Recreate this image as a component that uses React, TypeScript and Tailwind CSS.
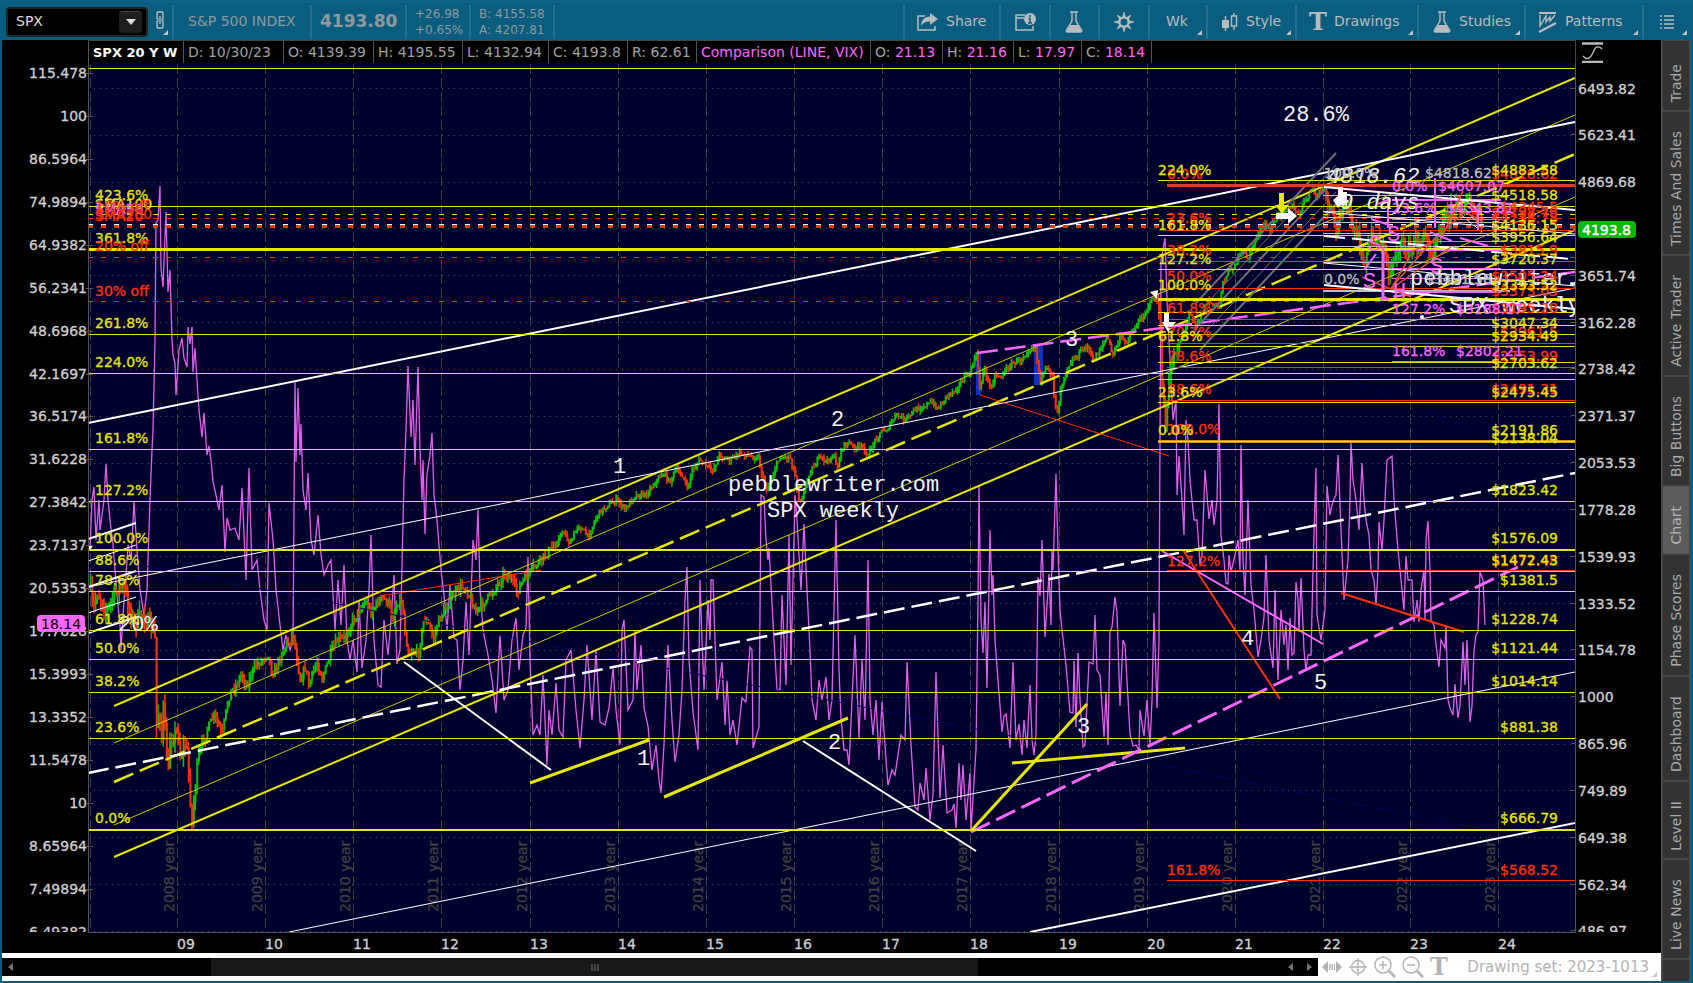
import React from 'react';

const YELLOW = '#e6e600';
const RED = '#ff3300';
const PINK = '#ff66ff';
const GREY = '#bfbfbf';

type Point = [number, number];

/**
 * Turns "x,y x,y ..." into points
 */
const parsePoints = (source: string): Point[] =>
  source
    .trim()
    .split(/\s+/)
    .map((pair) => pair.split(',').map(Number) as Point);

const SPX_PATH = parsePoints(`
90,588 93,612 97,592 102,600 106,612 112,600 118,587 124,590 128,602 134,625 143,614 149,624 152,628 155,640
156,720 157,740 159,690 161,750 163,705 166,745 168,780 170,738 174,735 178,730 180,755 183,750 186,742 189,780
192,825 194,795 198,760 203,740 208,728 214,715 218,725 222,735 227,705 230,692 236,685 241,675 247,685 252,672
256,665 262,660 268,653 272,675 276,668 282,652 289,640 293,635 297,660 300,680 306,665 308,688 312,675 317,662
322,678 327,665 332,650 338,640 345,638 350,625 356,615 362,605 366,602 371,612 377,603 382,598 388,603 393,618
398,600 402,603 406,640 409,655 413,650 418,655 424,618 430,628 433,640 438,622 444,610 452,597 460,587 466,588
470,598 476,612 484,602 492,593 500,580 504,573 510,578 517,592 522,582 528,575 531,570 541,560 550,550 560,537
563,530 570,545 578,524 588,537 597,515 606,506 617,500 625,510 634,495 645,495 655,482 663,473 669,482 676,470
683,476 687,490 692,470 700,460 704,465 713,470 719,455 730,460 740,453 750,456 758,457 762,475 766,490 771,480
776,465 780,457 790,457 795,475 799,500 803,495 808,475 814,465 820,457 827,462 833,455 837,468 842,447 848,443
856,448 864,447 868,458 872,445 880,432 888,428 896,415 905,420 915,410 925,405 931,403 938,408 946,396 956,388
965,377 970,373 974,360 977,353 979,390 984,368 990,388 995,375 1002,375 1010,365 1020,360 1028,350 1035,346
1040,380 1046,370 1052,372 1054,395 1057,415 1060,390 1065,372 1070,362 1078,355 1087,345 1092,360 1098,352
1107,336 1112,355 1120,338 1125,342 1133,330 1140,320 1147,308 1153,298 1157,300 1160,330 1162,380 1165,430
1168,400 1170,370 1175,350 1180,340 1185,330 1190,310 1195,325 1203,310 1207,300 1213,305 1219,308 1222,283
1228,272 1236,262 1242,252 1248,258 1253,245 1258,233 1264,225 1270,230 1276,218 1284,210 1292,205 1296,215
1300,213 1305,200 1311,190 1316,196 1321,190 1324,188 1328,205 1332,215 1335,230 1338,225 1342,205 1346,200
1350,215 1354,235 1358,240 1363,262 1367,250 1372,235 1378,240 1384,250 1388,275 1391,268 1396,250 1404,245
1410,250 1418,240 1427,240 1432,250 1440,225 1448,215 1455,205 1460,208 1466,200 1470,205 1475,212 1480,222 1482,229`);

const VIX_PATH = `
90,550 92,500 94,487 96,540 99,500 100,530 104,500 106,464 108,500 110,520 113,545 117,595 120,625 121,650
124,600 126,575 128,545 131,560 134,502 137,550 140,590 144,615 147,590 150,500 152,450 153,430 155,340 156,223
158,220 160,186 161,268 163,287 166,212 168,292 170,270 172,340 173,355 175,363 176,395 179,350 182,338 184,358
187,367 188,327 190,344 192,327 193,372 195,348 197,380 199,410 202,437 204,413 207,455 209,446 211,460 213,482
216,495 219,510 222,485 225,552 227,518 230,530 235,528 239,540 242,488 246,580 249,468 252,570 257,560 260,590
264,620 267,630 269,503 273,540 276,590 280,625 283,650 286,635 290,650 293,640 295,382 296,462 298,388 300,455
301,424 303,490 306,510 308,473 311,540 314,555 318,515 321,555 324,575 328,565 331,560 335,630 338,580 341,625
344,565 347,640 350,660 353,640 357,672 359,600 362,668 366,640 369,590 371,535 374,640 378,685 381,687 384,620
388,655 391,620 394,575 397,664 400,650 404,480 406,430 408,366 411,437 413,400 415,465 418,367 420,450 422,500
423,460 425,534 427,474 430,455 432,433 434,495 437,520 441,570 444,595 447,630 450,585 454,638 457,640 460,690
463,660 466,602 469,655 473,540 476,560 478,510 480,590 483,630 488,655 492,680 496,713 500,635 504,700 508,690
512,640 516,618 519,670 523,635 526,628 528,557 530,660 533,735 537,725 540,735 543,675 547,765 549,710 552,735
556,683 559,730 563,737 566,660 571,650 576,710 580,748 584,700 587,645 592,720 596,650 600,722 605,725 609,708
613,668 616,710 620,745 622,630 624,620 628,710 633,700 635,630 637,690 641,645 644,708 648,726 652,770 656,745
659,780 661,793 664,745 668,645 672,720 675,762 679,735 682,690 685,600 687,567 689,660 693,712 698,750 700,580
702,640 704,690 708,600 710,640 711,580 713,580 717,700 722,662 725,725 727,680 730,735 733,720 737,745 742,698
746,702 750,647 752,650 753,748 759,727 761,495 764,497 766,540 768,560 769,548 774,640 777,690 780,690 782,595
786,685 789,535 791,665 795,495 797,520 801,590 804,524 807,590 810,650 812,700 816,720 819,680 822,700 826,677
829,720 832,700 836,520 839,670 841,718 844,750 847,750 849,765 852,700 855,635 859,738 862,660 865,720 868,560
870,700 873,735 876,700 879,760 882,702 886,760 888,785 892,770 895,775 901,735 905,740 907,662 911,745 915,807
918,810 920,783 924,800 926,768 930,820 933,795 936,672 940,798 943,745 947,813 952,810 954,804 956,828 959,763
961,800 963,765 966,820 970,773 971,832 975,765 976,750 978,600 979,486 981,620 983,653 985,602 987,688 990,530
992,595 993,575 995,640 998,680 1002,732 1004,716 1006,714 1010,748 1013,662 1016,740 1019,724 1022,755 1024,720
1027,748 1030,685 1032,740 1034,755 1036,735 1038,577 1040,596 1042,540 1045,637 1049,574 1051,625 1052,550
1053,570 1056,474 1058,550 1060,610 1062,630 1066,665 1070,712 1073,713 1074,661 1076,727 1078,653 1080,700
1083,747 1085,745 1089,662 1093,664 1095,615 1097,670 1100,675 1104,737 1106,693 1108,745 1110,632 1112,627
1115,597 1117,612 1120,706 1123,640 1125,645 1130,734 1133,746 1136,745 1139,750 1140,710 1144,736 1147,700
1150,745 1152,700 1154,613 1157,708 1159,640 1160,440 1161,260 1165,238 1167,300 1171,380 1173,420 1176,400
1177,495 1179,456 1182,500 1184,535 1186,420 1188,440 1190,480 1192,500 1194,520 1197,520 1200,565 1202,555
1205,470 1209,519 1212,500 1214,525 1217,500 1219,404 1221,535 1224,560 1226,583 1228,584 1229,555 1231,572
1235,555 1238,540 1240,570 1241,445 1243,560 1245,595 1248,500 1251,585 1254,610 1258,657 1261,640 1264,617
1266,555 1269,640 1273,668 1275,590 1278,680 1281,610 1284,645 1286,625 1288,670 1290,618 1292,655 1294,653
1296,582 1298,600 1299,632 1301,578 1304,650 1306,670 1308,655 1311,655 1313,570 1315,500 1316,468 1317,615
1321,640 1325,610 1327,486 1330,515 1332,505 1334,499 1336,495 1338,455 1341,530 1344,600 1348,560 1350,500
1351,442 1353,480 1356,500 1359,530 1362,463 1364,500 1366,520 1369,535 1371,570 1374,580 1376,605 1378,570
1379,522 1382,550 1384,520 1387,460 1392,456 1394,500 1398,550 1402,590 1404,610 1406,556 1408,580 1412,580
1414,622 1417,600 1419,622 1421,590 1424,570 1425,620 1426,540 1428,521 1430,570 1431,620 1434,625 1436,645
1439,667 1441,640 1445,648 1446,625 1448,700 1450,708 1453,715 1455,684 1458,718 1460,705 1463,642 1465,685
1467,640 1470,722 1472,706 1474,650 1476,635 1478,632 1480,572 1483,580 1485,625`;

const YEARS: [number, string, string][] = [
  [177, '2008', '09'], [265, '2009', '10'], [353, '2010', '11'], [441, '2011', '12'], [530, '2012', '13'],
  [618, '2013', '14'], [706, '2014', '15'], [794, '2015', '16'], [882, '2016', '17'], [970, '2017', '18'],
  [1059, '2018', '19'], [1147, '2019', '20'], [1235, '2020', '21'], [1323, '2021', '22'], [1410, '2022', '23'],
  [1498, '2023', '24'],
];

const LEFT_SCALE = [
  '115.478', '100', '86.5964', '74.9894', '64.9382', '56.2341', '48.6968', '42.1697', '36.5174', '31.6228', '27.3842',
  '23.7137', '20.5353', '17.7828', '15.3993', '13.3352', '11.5478', '10', '8.65964', '7.49894', '6.49382',
];

const RIGHT_SCALE = [
  '6493.82', '5623.41', '4869.68', '4216.97', '3651.74', '3162.28', '2738.42', '2371.37', '2053.53', '1778.28',
  '1539.93', '1333.52', '1154.78', '1000', '865.96', '749.89', '649.38', '562.34', '486.97',
];

// y, label on the left, price on the right
const MAIN_FIB: [number, string, string][] = [
  [206, '423.6%', ''], [249, '361.8%', ''], [334, '261.8%', ''], [373, '224.0%', ''], [449, '161.8%', '$2138.04'],
  [501, '127.2%', '$1823.42'], [549, '100.0%', '$1576.09'], [571, '88.6%', '$1472.43'], [591, '78.6%', '$1381.5'],
  [630, '61.8%', '$1228.74'], [659, '50.0%', '$1121.44'], [692, '38.2%', '$1014.14'], [738, '23.6%', '$881.38'],
  [829, '0.0%', '$666.79'],
];

const THICK_LEVELS: Record<number, number> = { 249: 3, 549: 2, 829: 2 };

// baseline, label on the left, price on the right
const RED_LABELS: [number, string, string][] = [
  [179, '0.0%', '$4818.62'], [223, '23.6%', '$4238.78'], [255, '38.2%', '$3815.9'], [281, '50.0%', '$3505.24'],
  [313, '61.8%', '$3195.28'], [337, '70.7%', '$2961.5'], [361, '78.6%', '$2753.99'], [394, '88.6%', '$2491.31'],
  [434, '100.0%', ''], [566, '127.2%', '$1477.48'], [875, '161.8%', '$568.52'],
];

const YELLOW_LABELS: [number, string, string][] = [
  [175, '224.0%', '$4883.58'], [200, '', '$4518.58'], [230, '161.8%', '$4136.15'], [242, '', '$3956.64'],
  [264, '127.2%', '$3720.37'], [290, '100.0%', '$3393.52'], [328, '', '$3047.34'], [341, '61.8%', '$2934.49'],
  [368, '', '$2703.62'], [397, '23.6%', '$2475.45'], [435, '0.0%', '$2191.86'],
];

/**
 * Weekly bars spread along the SPX path, with a fixed pseudo random wick
 */
const buildCandles = () => {
  let seed = 7;
  const random = () => {
    seed = (seed * 16807) % 2147483647;
    return seed / 2147483647;
  };

  let segment = 0;
  let last = SPX_PATH[0][1];
  const up: string[] = [];
  const down: string[] = [];

  for (let week = 0; week < 824; week++) {
    const x = 90.5 + week * 1.69;
    while (segment < SPX_PATH.length - 2 && SPX_PATH[segment + 1][0] < x) segment++;
    const [x1, y1] = SPX_PATH[segment];
    const [x2, y2] = SPX_PATH[segment + 1];
    const wild = x < 200 || x > 1325 || (x > 1158 && x < 1180) ? 16 : x < 560 ? 9 : 6;
    const close = y1 + ((y2 - y1) * (x - x1)) / (x2 - x1) + (random() - 0.5) * wild;
    const high = Math.min(last, close) - random() * wild * 0.7;
    const low = Math.max(last, close) + random() * wild * 0.7;
    const body = Math.max(2, Math.abs(close - last));
    const top = Math.min(last, close);
    const bar = `M${x.toFixed(1)} ${high.toFixed(1)}V${low.toFixed(1)}M${(x + 0.5).toFixed(1)} ${top.toFixed(1)}v${body.toFixed(1)}`;
    (close < last ? up : down).push(bar);
    last = close;
  }

  return { up: up.join(''), down: down.join('') };
};

const candles = buildCandles();

interface LineProps {
  from: Point;
  to: Point;
  color?: string;
  width?: number;
  dash?: string;
}

const Line: React.FC<LineProps> = ({ from, to, color = '#ffffff', width = 1, dash }) => (
  <line x1={from[0]} y1={from[1]} x2={to[0]} y2={to[1]} stroke={color} strokeWidth={width} strokeDasharray={dash} />
);

interface LevelProps {
  y: number;
  x?: number;
  end?: number;
  color?: string;
  width?: number;
  dash?: string;
}

const Level: React.FC<LevelProps> = ({ y, x = 88, end = 1575, color = YELLOW, width = 1, dash }) => (
  <line x1={x} x2={end} y1={y + 0.5} y2={y + 0.5} stroke={color} strokeWidth={width} strokeDasharray={dash} shapeRendering="crispEdges" />
);

const Grid = () => (
  <g>
    {RIGHT_SCALE.map((label, index) => (
      <Level key={label} y={Math.round(88 + index * 46.83)} color="#505058" dash="1 5" />
    ))}
    {[90, ...YEARS.map(([x]) => x)].map((x) => (
      <line key={x} x1={x + 0.5} x2={x + 0.5} y1={64} y2={932} stroke="#404040" strokeDasharray="10 4" />
    ))}
    {YEARS.map(([x, year]) => (
      <text key={year} transform={`translate(${x - 3} 912) rotate(-90)`} fill="#404040" stroke="#404040" strokeWidth={0.3}>
        {year} year
      </text>
    ))}
  </g>
);

const Axes = () => (
  <g fill="#d0d0d0">
    <g clipPath="url(#axisClip)">
      {LEFT_SCALE.map((label, index) => {
        const y = 73 + index * 42.93;
        return (
          <g key={label}>
            <text x={87} y={y + 5} textAnchor="end" stroke="#d0d0d0" strokeWidth={0.3}>{label}</text>
            <path d={`M86 ${Math.round(y) + 0.5}h7`} stroke="#555555" />
          </g>
        );
      })}
      {RIGHT_SCALE.map((label, index) => {
        const y = 88.5 + index * 46.83;
        return (
          <g key={label}>
            <text x={1578} y={y + 5} stroke="#d0d0d0" strokeWidth={0.3}>{label}</text>
            <path d={`M1571 ${Math.round(y) - 0.5}h5`} stroke="#555555" />
          </g>
        );
      })}
    </g>
    {YEARS.map(([x, , label]) => (
      <text key={label} x={x} y={949} stroke="#d0d0d0" strokeWidth={0.3}>{label}</text>
    ))}
    <path d="M88.5 63V932.5H1575.5V63" fill="none" stroke="#55555a" />
    <rect x={37} y={615} width={48} height={17} rx={4} fill={PINK} />
    <text x={41} y={629} fill="#000000">18.14</text>
    <rect x={1578} y={221} width={58} height={17} rx={4} fill="#00b900" />
    <text x={1582} y={235} fill="#ffffff" stroke="#ffffff" strokeWidth={0.4}>4193.8</text>
  </g>
);

const Trendlines = () => (
  <g>
    <Line from={[140, 565]} to={[1480, 828]} color="#000066" dash="20 8" />
    <Line from={[1220, 325]} to={[1495, 440]} color="#000066" dash="20 8" />
    <Line from={[1190, 430]} to={[1330, 300]} color="#000066" dash="20 8" />

    <Line from={[114, 706]} to={[1575, 78]} color={YELLOW} width={2} />
    <Line from={[114, 743]} to={[1575, 115]} color="#c8c800" />
    <Line from={[114, 782]} to={[1575, 154]} color={YELLOW} width={2.5} dash="21 7" />
    <Line from={[114, 825]} to={[1575, 197]} color="#c8c800" />
    <Line from={[114, 857]} to={[1575, 230]} color={YELLOW} width={2} />

    <Line from={[88, 423]} to={[1575, 122]} width={2} />
    <Line from={[88, 587]} to={[1575, 288]} />
    <Line from={[88, 773]} to={[1575, 473]} width={2.5} dash="21 7" />
    <Line from={[289, 932]} to={[1575, 672]} />
    <Line from={[1030, 932]} to={[1575, 823]} width={2} />

    {[539, 587, 633].map((y) => (
      <Line key={y} from={[88, y]} to={[136, y - 16]} width={2} />
    ))}
    {[561, 613].map((y) => (
      <Line key={y} from={[88, y]} to={[136, y - 16]} />
    ))}
    <path d="M88 546l5-1-3 6h-2z" fill="#ffffff" />

    <Line from={[380, 596]} to={[541, 570]} color={RED} />
    <Line from={[980, 395]} to={[1169, 456]} color={RED} />
    <Line from={[404, 662]} to={[551, 770]} width={2} />
    <Line from={[803, 741]} to={[976, 851]} width={2} />
    <Line from={[530, 783]} to={[649, 740]} color={YELLOW} width={3} />
    <Line from={[664, 797]} to={[848, 718]} color={YELLOW} width={3} />
    <Line from={[1012, 763]} to={[1185, 748]} color={YELLOW} width={3} />
    <Line from={[971, 831]} to={[1087, 704]} color={YELLOW} width={3} />
    <Line from={[971, 832]} to={[1518, 567]} color={PINK} width={3} dash="21 7" />
    <Line from={[977, 353]} to={[1575, 272]} color={PINK} width={2.5} dash="21 7" />
    <Line from={[1162, 551]} to={[1323, 644]} color={PINK} width={2} />
    <Line from={[1183, 550]} to={[1280, 699]} color={RED} width={2} />
    <Line from={[1341, 593]} to={[1464, 632]} color={RED} width={2} />

    {/* grey channel under the last rally */}
    <Line from={[1196, 303]} to={[1336, 153]} color="#6e6e78" width={2} />
    <Line from={[1196, 315]} to={[1336, 165]} color="#6e6e78" />
    <Line from={[1194, 330]} to={[1336, 178]} color="#6e6e78" width={2} />
    <Line from={[1200, 338]} to={[1336, 192]} color="#6e6e78" />
    <Line from={[1200, 350]} to={[1336, 204]} color="#6e6e78" width={2} />
  </g>
);

const Levels = () => (
  <g>
    <Level y={68} />
    {MAIN_FIB.map(([y]) => (
      <Level key={y} y={y} width={THICK_LEVELS[y] ?? 1} />
    ))}
    <Level y={214} dash="5 8" />
    <Level y={218} color={RED} dash="5 8" />
    <Level y={224} color="#ffffff" dash="5 8" width={2} />
    <Level y={226} color={RED} dash="5 8" width={3} />
    <Level y={257} color={RED} dash="5 8" />
    <Level y={301} color={RED} dash="5 8" />

    {[180, 235, 269, 312, 325, 334, 346, 362, 373, 379, 402].map((y) => (
      <Level key={y} y={y} x={1158} />
    ))}
    <Level y={299} x={1158} width={3} />
    <Level y={441} x={1158} width={3} color="#d09000" />
    <Level y={441} x={1158} />
    <Level y={185} x={1167} color="#d84020" width={3} />
    {[230, 261, 288, 319, 343, 367, 400, 570, 880].map((y) => (
      <Level key={y} y={y} x={1167} color={RED} />
    ))}
    {[195, 211, 217, 222, 233, 246, 262].map((y) => (
      <Level key={y} y={y} x={1323} end={1510} color={GREY} />
    ))}
    <Level y={290} x={1323} end={1510} color={GREY} width={2} />
    {[219, 241, 250, 268, 278, 319, 361].map((y) => (
      <Level key={y} y={y} x={1392} end={1501} color={PINK} />
    ))}
    <Level y={199} x={1392} end={1501} color={PINK} width={2} />
    <Level y={291} x={1392} end={1501} color={PINK} width={2} />
  </g>
);

const RecentCluster = () => (
  <g>
    <Line from={[1324, 187]} to={[1575, 210]} width={2} />
    <Line from={[1324, 212]} to={[1575, 234]} />
    <Line from={[1324, 236]} to={[1570, 259]} width={2} dash="21 7" />
    <Line from={[1324, 263]} to={[1575, 286]} />
    <Line from={[1324, 285]} to={[1575, 309]} width={2} />
    <path d="M1453 195l30 34M1460 214l22 18M1466 200l16 14" stroke="#ffffff" strokeDasharray="6 3" />
    <path
      d="M1362 277l29 12 22-38 28-12 22-48M1391 288l44-50 30-26 18 10M1391 289l60-42M1391 288l20 9"
      fill="none"
      stroke="#e05030"
      strokeWidth={1.5}
    />
    <path d="M1435 178v50M1478 212v18" stroke={PINK} strokeWidth={2} />
    <path d="M1383 248v51M1380 299h9" stroke={PINK} strokeWidth={3} />
    <path d="M1371 219l18 6M1378 204l10-4v28M1364 270l12-16M1430 232l22 9M1460 238l28 8" stroke={PINK} strokeWidth={2} fill="none" />
    <g fill={PINK} fontFamily="'Liberation Mono', monospace" fontSize={22}>
      <text x={1368} y={251}>S</text>
      <text x={1387} y={241}>S</text>
      <text x={1430} y={273}>S</text>
      <text x={1363} y={288}>S</text>
      <text x={1393} y={298}>H</text>
    </g>
    <path d="M1279 193h5v12h5l-7 9-7-9h4z" fill={YELLOW} />
    <path d="M1276 213h12v-5l9 8-9 8v-5h-12z" fill="#ffffff" />
    <path d="M1338 187h5v5h4v14l-5-2-4 4-5-8 5-4z" fill="#ffffff" />
    <path d="M1164 313h5v9h7l-8 10-6-10h2zM1150 292l8-2-1 9z" fill="#ffffff" />
    <circle cx={1422} cy={317} r={2} fill="#ffffff" />
    <circle cx={1572} cy={284} r={2} fill="#ffffff" />
  </g>
);

/**
 * Typewriter notes, drawn below the price labels
 */
const Notes = () => (
  <g fill="#f4f4f4" fontFamily="'Liberation Mono', monospace" fontSize={22}>
    <text x={118} y={631}>20%</text>
    <text x={728} y={491}>pebblewriter.com</text>
    <text x={767} y={517}>SPX weekly</text>
    <text x={1283} y={121}>28.6%</text>
    <text x={1327} y={183} fontStyle="italic">4818.62</text>
    <text x={1340} y={209} fontStyle="italic">0 days</text>
    <text x={1410} y={285}>pebblewriter.com</text>
    <text x={1449} y={312}>SPX weekly</text>
    <text x={613} y={473}>1</text>
    <text x={831} y={426}>2</text>
    <text x={1065} y={346}>3</text>
    <text x={637} y={765}>1</text>
    <text x={828} y={749}>2</text>
    <text x={1077} y={733}>3</text>
    <text x={1241} y={645}>4</text>
    <text x={1314} y={689}>5</text>
  </g>
);

const Labels = () => (
  <g strokeWidth={0.3}>
    <g fill={GREY} stroke={GREY}>
      <text x={1324} y={178}>100.0%</text>
      <text x={1425} y={178}>$4818.62</text>
      <text x={1324} y={284}>0.0%</text>
      <text x={1425} y={284}>$3491.58</text>
    </g>
    <g fill={RED} stroke={RED}>
      {RED_LABELS.map(([y, percent, price]) => (
        <g key={y}>
          <text x={1167} y={y}>{percent}</text>
          <text x={1558} y={y} textAnchor="end">{price}</text>
        </g>
      ))}
      <text x={1558} y={212} textAnchor="end">$4345.5</text>
      <text x={1558} y={217} textAnchor="end">$4198.76</text>
      <text x={1558} y={296} textAnchor="end">$3373.03</text>
    </g>
    <g fill={YELLOW} stroke={YELLOW}>
      <text x={95} y={209}>SMA100</text>
      {MAIN_FIB.map(([y, percent, price]) => (
        <g key={y}>
          <text x={95} y={y - 6}>{percent}</text>
          <text x={1558} y={y - 6} textAnchor="end">{price}</text>
        </g>
      ))}
      {YELLOW_LABELS.map(([y, percent, price]) => (
        <g key={y}>
          <text x={1158} y={y}>{percent}</text>
          <text x={1558} y={y} textAnchor="end">{price}</text>
        </g>
      ))}
    </g>
    <g fill={PINK} stroke={PINK}>
      <text x={95} y={214}>SMA50</text>
      <text x={1392} y={191}>0.0%</text>
      <text x={1438} y={191}>$4607.07</text>
      <text x={1392} y={213}>23.6%</text>
      <text x={1447} y={213}>$4343.81</text>
      <text x={1392} y={314}>127.2%</text>
      <text x={1456} y={314}>$3188.17</text>
      <text x={1392} y={356}>161.8%</text>
      <text x={1456} y={356}>$2802.21</text>
    </g>
    <g fill={RED} stroke={RED}>
      <text x={95} y={211}>10% off</text>
      <text x={95} y={219}>SMA200</text>
      <text x={95} y={221}>SMA20</text>
      <text x={95} y={251}>20% off</text>
      <text x={95} y={296}>30% off</text>
    </g>
  </g>
);

const Chart = () => (
  <svg
    viewBox="2 63 1659 890"
    className="block h-auto w-full bg-black"
    fontFamily="'DejaVu Sans', sans-serif"
    fontSize={14}
    role="img"
    aria-label="SPX weekly chart with VIX comparison"
  >
    <defs>
      <clipPath id="plotClip"><rect x={88} y={63} width={1487} height={869} /></clipPath>
      <clipPath id="axisClip"><rect x={2} y={63} width={1659} height={869} /></clipPath>
    </defs>
    <rect x={88} y={63} width={1487} height={869} fill="#00002d" />
    <g clipPath="url(#plotClip)">
      <Grid />
      <polyline points={VIX_PATH} fill="none" stroke="#e060ec" strokeWidth={1.3} />
      <rect x={976} y={353} width={5} height={42} fill="#0033cc" />
      <rect x={1034} y={345} width={9} height={40} fill="#0033cc" />
      <path d={candles.up} stroke="#00c400" strokeWidth={1.5} />
      <path d={candles.down} stroke={RED} strokeWidth={1.5} />
      <Trendlines />
      <Levels />
      <RecentCluster />
      <Notes />
      <Labels />
    </g>
    <Axes />
  </svg>
);

const Corner = () => (
  <svg viewBox="0 0 5 5" className="absolute right-1 bottom-1 size-[5px]" fill="#c0c4c6">
    <path d="M5 0v5H0z" />
  </svg>
);

const FlaskIcon = () => (
  <svg viewBox="0 0 18 22" className="h-[22px] w-[18px]" fill="none" stroke="currentColor" strokeWidth="1.4">
    <path d="M5 1h8M7 1v9l-5.500 9q-.8 2 1 2h13q1.800 0 1-2L11 10V1" />
    <path d="M5 14h8l4 7H1z" fill="currentColor" stroke="none" />
  </svg>
);

interface ToolProps {
  className: string;
  label?: string;
  title?: string;
  menu?: boolean;
  children?: React.ReactNode;
}

const Tool: React.FC<ToolProps> = ({ className, label, title, menu = false, children }) => (
  <button
    type="button"
    title={title}
    className={`relative flex h-[34px] shrink-0 items-center gap-2 border-l-2 border-[#26708f] ${className}`}
  >
    {children}
    {label && <span>{label}</span>}
    {menu && <Corner />}
  </button>
);

const Toolbar = () => (
  <header className="flex h-10 items-center border-t-[3px] border-[#0d6286] pr-0.5 pl-1.5 text-[#b8bcbe]">
    <div className="flex h-[30px] w-[142px] shrink-0 items-center rounded border-2 border-[#1c2426] bg-black pr-1">
      <input
        aria-label="Symbol"
        defaultValue="SPX"
        className="w-0 grow bg-transparent pl-2 text-[14px] text-[#dddddd] outline-none"
      />
      <button type="button" aria-label="Symbol list" className="flex h-[22px] w-[23px] items-center justify-center rounded-sm border-t border-[#444444] bg-[#1e1e1e]">
        <svg viewBox="0 0 10 6" className="h-[6px] w-[10px]" fill="#dddddd"><path d="M0 0h10L5 6z" /></svg>
      </button>
    </div>
    <button type="button" aria-label="Link" className="relative flex h-[34px] w-6 shrink-0 items-center justify-center pb-1">
      <svg viewBox="0 0 8 18" className="h-[18px] w-2" fill="none" stroke="currentColor" strokeWidth="1.300">
        <path d="M1 8V2q0-1 1-1h4q1 0 1 1v6H5.500M1 10v6q0 1 1 1h4q1 0 1-1v-6H5.500M4 5v8M1 8h1.500M1 10h1.500" />
      </svg>
      <Corner />
    </button>
    <div className="flex h-[34px] shrink-0 items-center text-[#8f999e]">
      <span className="flex h-full w-[138px] items-center border-l-2 border-[#26708f] pl-3.5">S&amp;P 500 INDEX</span>
      <span className="flex h-full w-[95px] items-center border-l-2 border-[#26708f] pl-2 text-[17px] font-bold">4193.80</span>
      <span className="flex h-full w-16 flex-col justify-center border-l-2 border-[#26708f] pl-2 text-[12px] leading-4">
        <span>+26.98</span>
        <span>+0.65%</span>
      </span>
      <span className="flex h-full w-[86px] flex-col justify-center border-x-2 border-[#26708f] pl-2 text-[12px] leading-4">
        <span>B: 4155.58</span>
        <span>A: 4207.81</span>
      </span>
    </div>
    <div className="grow" />
    <Tool className="w-[96px] pl-3" label="Share">
      <svg viewBox="0 0 21 18" className="h-[18px] w-[21px]" fill="none" stroke="currentColor" strokeWidth="1.5">
        <path d="M8 3H1v14h17v-4" />
        <path d="M13 0l8 6-8 6V8.500Q7 8 4 13 4 4 13 3.500z" fill="currentColor" stroke="none" />
      </svg>
    </Tool>
    <Tool className="w-[50px] pl-3.5" title="Info">
      <svg viewBox="0 0 21 18" className="h-[18px] w-[21px]" fill="none" stroke="currentColor" strokeWidth="1.5">
        <path d="M10 2H1v15h17v-4M1 5h8" />
        <circle cx="15" cy="6" r="6" fill="currentColor" stroke="none" />
        <path d="M15 2v2M13.500 5.500H15V10M13 10h4" stroke="#0b5d80" />
      </svg>
    </Tool>
    <Tool className="w-[49px] pl-3.5" title="Lab"><FlaskIcon /></Tool>
    <Tool className="w-[50px] pl-3.5" title="Settings">
      <svg viewBox="0 0 20 20" className="size-5" fill="none" stroke="currentColor">
        <circle cx="10" cy="10" r="4.500" strokeWidth="2" />
        <path d="M10 0l1.500 5h-3zM10 20l1.500-5h-3zM0 10l5-1.500v3zM20 10l-5-1.500v3zM3 3l4.500 2.500-2 2zM17 17l-4.500-2.500 2-2zM17 3l-2.500 4.500-2-2zM3 17l2.500-4.500 2 2z" fill="currentColor" strokeWidth=".6" />
      </svg>
    </Tool>
    <Tool className="w-[58px] pl-4" label="Wk" menu />
    <Tool className="w-[89px] pl-3.5" label="Style" menu>
      <svg viewBox="0 0 16 20" className="h-5 w-4" fill="none" stroke="currentColor" strokeWidth="1.4">
        <path d="M3.500 4v15M12 1v3M12 14v4M9.500 4h5v10h-5z" />
        <path d="M0 8h7v8H0z" fill="currentColor" stroke="none" />
      </svg>
    </Tool>
    <Tool className="w-[122px] pl-3" label="Drawings" menu>
      <span aria-hidden="true" className="w-[17px] font-['DejaVu_Serif',serif] text-[24px] leading-6 font-bold">T</span>
    </Tool>
    <Tool className="w-[107px] pl-3.5" label="Studies" menu><FlaskIcon /></Tool>
    <Tool className="w-[118px] pl-3" label="Patterns" menu>
      <svg viewBox="0 0 19 22" className="h-[22px] w-[19px]" fill="none" stroke="currentColor" strokeWidth="1.400">
        <path d="M1 2h17M1 21L18 12" strokeWidth="2.200" />
        <path d="M2 4v11l6-10v6l4-5v4l5-6" />
      </svg>
    </Tool>
    <Tool className="w-[49px] pl-4" title="Menu" menu>
      <svg viewBox="0 0 14 14" className="size-3.5" stroke="currentColor" strokeWidth="1.500">
        <path d="M0 1h2M4 1h10M0 5h2M4 5h10M0 9h2M4 9h10M0 13h2M4 13h10" />
      </svg>
    </Tool>
  </header>
);

interface CellProps {
  className: string;
  name: string;
  value: string;
  valueClass?: string;
}

const Cell: React.FC<CellProps> = ({ className, name, value, valueClass = '' }) => (
  <span className={`shrink-0 border-l border-[#555555] pl-1 whitespace-pre ${className}`}>
    {name}: <span className={valueClass}>{value}</span>
  </span>
);

const QuoteStrip = () => (
  <div className="flex h-[23px] bg-black pl-[86px] text-[14px] leading-[23px] text-[#a0a0a0]">
    <div className="flex grow overflow-hidden border-t border-r border-[#444444]">
      <span className="w-[95px] shrink-0 border-l border-[#555555] pl-1 text-[13px] font-bold whitespace-nowrap text-white">SPX 20 Y W</span>
      <Cell className="w-[100px]" name="D" value="10/30/23" />
      <Cell className="w-[90px]" name="O" value="4139.39" />
      <Cell className="w-[89px]" name="H" value="4195.55" />
      <Cell className="w-[86px]" name="L" value="4132.94" />
      <Cell className="w-[79px]" name="C" value="4193.8" />
      <Cell className="w-[69px]" name="R" value="62.61" />
      <span className="w-[174px] shrink-0 border-l border-[#555555] pl-1 whitespace-nowrap text-[#ff66ff]">Comparison (LINE, VIX)</span>
      <Cell className="w-[72px]" name="O" value="21.13" valueClass="text-[#ff66ff]" />
      <Cell className="w-[71px]" name="H" value="21.16" valueClass="text-[#ff66ff]" />
      <Cell className="w-[68px]" name="L" value="17.97" valueClass="text-[#ff66ff]" />
      <Cell className="w-[71px] border-r" name="C" value="18.14" valueClass="text-[#ff66ff]" />
    </div>
    <div className="w-[85px] shrink-0 pt-0.5 pl-1.5">
      <svg viewBox="0 0 21 21" className="size-[21px]" fill="none" stroke="#b8b8b8">
        <path d="M0 1.500h21M0 20h21" strokeWidth="2.500" />
        <path d="M1 14q3 3.500 6 2c4-2 5-11 8-11q3-.5 5 2" strokeWidth="1.400" />
      </svg>
    </div>
  </div>
);

const TABS = ['Trade', 'Times And Sales', 'Active Trader', 'Big Buttons', 'Chart', 'Phase Scores', 'Dashboard', 'Level II', 'Live News'];

const Sidebar = () => (
  <nav className="flex w-[29px] shrink-0 flex-col border-t border-r border-l-2 border-[#484848] bg-[#333333] pt-1">
    {TABS.map((tab) => (
      <button
        key={tab}
        type="button"
        className={`flex w-full justify-center border-b-2 border-[#484848] pt-[19px] pb-2 text-[14px] leading-4 ${
          tab === 'Chart' ? 'bg-[#5c5c5c] text-[#b4b4b4]' : 'text-[#a8a8a8]'
        }`}
      >
        <span className="rotate-180 whitespace-nowrap [writing-mode:vertical-rl]">{tab}</span>
      </button>
    ))}
  </nav>
);

const Magnifier: React.FC<{ plus?: boolean }> = ({ plus = false }) => (
  <svg viewBox="0 0 22 22" className="size-[22px]" fill="none" stroke="currentColor" strokeWidth="1.500">
    <circle cx="9" cy="9" r="8" />
    <path d="M5 9h8" />
    {plus && <path d="M9 5v8" />}
    <path d="M15 15l6 6" strokeWidth="2.500" />
  </svg>
);

const BottomBar = () => (
  <footer className="flex h-7 items-center bg-white text-[#b3b3b3]">
    <div className="flex h-[18px] grow items-center bg-black text-[#777777]">
      <button type="button" aria-label="Scroll to start" className="flex w-[209px] pl-1.5">
        <svg viewBox="0 0 5 8" className="h-2 w-[5px]" fill="currentColor"><path d="M5 0v8L0 4z" /></svg>
      </button>
      <div className="flex h-full w-[767px] items-center justify-center bg-[#171717]">
        <svg viewBox="0 0 8 7" className="h-[7px] w-2" stroke="currentColor"><path d="M1 0v7M4 0v7M7 0v7" /></svg>
      </div>
      <div className="grow" />
      <button type="button" aria-label="Scroll left" className="px-2">
        <svg viewBox="0 0 5 8" className="h-2 w-[5px]" fill="currentColor"><path d="M5 0v8L0 4z" /></svg>
      </button>
      <button type="button" aria-label="Scroll right" className="px-1.5">
        <svg viewBox="0 0 5 8" className="h-2 w-[5px]" fill="currentColor"><path d="M0 0v8l5-4z" /></svg>
      </button>
    </div>
    <div className="flex shrink-0 items-center gap-1.5 pl-1">
      <button type="button" aria-label="Expand">
        <svg viewBox="0 0 20 12" className="h-3 w-5" fill="currentColor">
          <path d="M0 6l6-6v12zM20 6l-6-6v12zM7 3h1.500v6H7zM9.500 3H11v6H9.500zM12 3h1v6h-1z" />
        </svg>
      </button>
      <button type="button" aria-label="Crosshair">
        <svg viewBox="0 0 20 20" className="size-5" fill="none" stroke="currentColor" strokeWidth="1.400">
          <circle cx="10" cy="10" r="6.500" />
          <path d="M10 1v18M1 10h18" />
        </svg>
      </button>
      <button type="button" aria-label="Zoom in"><Magnifier plus /></button>
      <button type="button" aria-label="Zoom out"><Magnifier /></button>
      <button type="button" aria-label="Drawing tool" className="w-[17px] font-['DejaVu_Serif',serif] text-[24px] leading-6 font-bold">T</button>
    </div>
    <button type="button" className="relative h-7 w-[214px] shrink-0 pr-3 text-right text-[15px] whitespace-nowrap">
      Drawing set: 2023-1013
      <Corner />
    </button>
  </footer>
);

const App = () => (
  <div className="flex min-h-screen flex-col bg-[#0b5d80] pb-0.5 font-['DejaVu_Sans',sans-serif] text-[14px]">
    <Toolbar />
    <div className="flex grow pr-[3px] pl-0.5">
      <main className="flex min-w-0 grow flex-col">
        <QuoteStrip />
        <div className="grow bg-black">
          <Chart />
        </div>
        <BottomBar />
      </main>
      <Sidebar />
    </div>
  </div>
);

export default App;
